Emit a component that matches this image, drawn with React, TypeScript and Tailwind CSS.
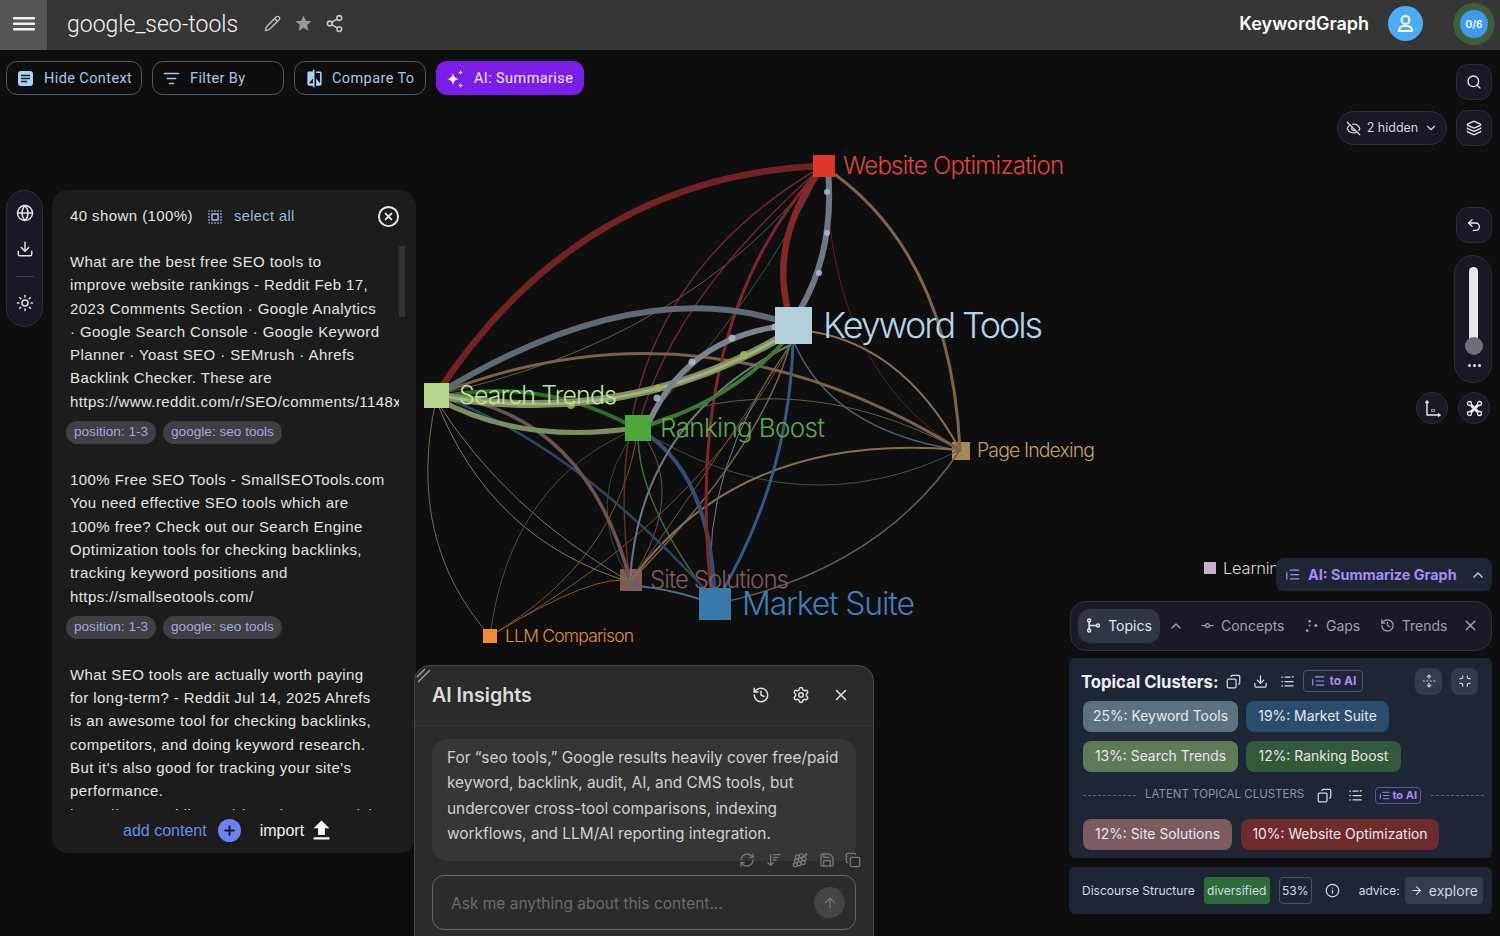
import {
  ArrowRight,
  ArrowUp,
  ArrowDownWideNarrow,
  ChevronDown,
  ChevronUp,
  CircleX,
  Copy,
  Download,
  EyeOff,
  GitCommitHorizontal,
  Globe,
  Grape,
  History,
  Info,
  Layers,
  ListFilter,
  Minimize,
  Pencil,
  Plus,
  RefreshCw,
  Save,
  Search,
  Settings,
  Share2,
  Sun,
  Undo2,
  UnfoldVertical,
  X
} from 'lucide-react'
import { MdCompare, MdFileUpload, MdOutlineSelectAll, MdStar } from 'react-icons/md'

type Edge = [string, number, string]

// path, width, colour
const edges: Edge[] = [
  ['M436 400 Q405 540 490 636', 1, '#6f6f52'],
  ['M436 400 Q490 540 630 582', 1, '#767a5c'],
  ['M436 400 Q505 510 630 582', 1, '#767a5c'],
  ['M638 428 Q510 480 490 636', 1, '#3b5a33'],
  ['M490 636 Q600 570 630 582', 1, '#8a5a2a'],
  ['M490 636 Q700 520 793 340', 1, '#7a5428'],
  ['M490 636 Q620 560 638 428', 1, '#7a5428'],
  ['M436 395 Q690 340 823 166', 1, '#5a5f45'],
  ['M823 166 Q590 300 630 580', 1.5, '#6b2a2a'],
  ['M823 166 Q670 300 638 428', 1.5, '#6b2a2a'],
  ['M823 166 Q760 300 638 428', 1, '#3b5a33'],
  ['M826 170 Q830 370 958 448', 1, '#5c2222'],
  ['M826 170 Q835 240 800 310', 1.5, '#7a5d58'],
  ['M638 428 Q800 530 960 450', 1, '#3b5a33'],
  ['M638 428 Q790 360 960 450', 1, '#6b5a40'],
  ['M638 428 Q635 500 712 600', 1.5, '#3d6b35'],
  ['M638 428 Q580 500 630 580', 1, '#2f4f2c'],
  ['M638 428 Q690 490 630 582', 1, '#6e5350'],
  ['M790 345 Q700 470 712 592', 1, '#767e8a'],
  ['M790 345 Q760 450 630 582', 1.5, '#7a5d58'],
  ['M790 345 Q730 440 630 582', 1, '#7a5428'],
  ['M793 340 Q830 430 958 450', 1.5, '#56606e'],
  ['M715 604 Q880 570 960 450', 1.5, '#6e5a55'],
  ['M630 582 Q740 430 960 450', 2, '#85704c'],
  ['M823 166 Q950 250 960 450', 3, '#7d6545'],
  ['M800 330 Q900 340 960 450', 2, '#8a6f4a'],
  ['M436 395 Q700 290 960 450', 3, '#7a6342'],
  ['M715 604 Q790 480 793 340', 3, '#2f5a85'],
  ['M436 395 Q570 440 715 600', 2.5, '#294663'],
  ['M640 430 Q710 470 715 600', 4, '#2d4f73'],
  ['M436 395 Q585 410 630 580', 3.5, '#6e5250'],
  ['M823 166 Q680 320 712 600', 3, '#7f2727'],
  ['M630 585 Q680 590 715 605', 2, '#4a6a88'],
  ['M790 345 Q640 420 630 580', 2, '#6c7480'],
  ['M436 395 Q580 175 823 166', 6.5, '#722222'],
  ['M820 170 Q770 240 788 310', 6.5, '#822828'],
  ['M436 398 Q540 375 635 428', 4, '#2f6b2c'],
  ['M640 428 Q735 400 790 335', 4, '#3c7a33'],
  ['M436 398 Q520 445 635 428', 5, '#7e8f5f'],
  ['M436 395 Q630 430 793 330', 8, '#7f8f62'],
  ['M436 395 Q630 430 793 330', 3, '#a3b37c'],
  ['M436 395 Q640 270 793 325', 6, '#606a76'],
  ['M650 420 Q690 335 790 325', 5.5, '#7a8490'],
  ['M800 310 Q835 250 828 170', 6, '#6f7785']
]

const dots: [number, number, number, string][] = [
  [827, 192, 3, '#a9bdd3'],
  [827, 233, 3, '#a9bdd3'],
  [819, 273, 3, '#a9bdd3'],
  [775, 327, 3.5, '#a9bdd3'],
  [732, 338, 3.5, '#a9bdd3'],
  [692, 362, 3.5, '#a9bdd3'],
  [657, 398, 3.5, '#a9bdd3'],
  [744, 355, 4, '#9cb45a'],
  [658, 388, 3.5, '#9cb45a'],
  [571, 405, 4, '#9cb45a'],
  [478, 400, 3.5, '#9cb45a']
]

// x, y, size, fill, label, text x, baseline, font size, text width, text colour
const nodes: [number, number, number, string, string, number, number, number, number, string][] = [
  [813, 155, 22, '#e0352b', 'Website Optimization', 843, 174, 24, 221, '#e0453a'],
  [775, 307, 37, '#b3d0d8', 'Keyword Tools', 823, 338, 36, 220, '#b4d4ea'],
  [424, 383, 25, '#b4d68f', 'Search Trends', 459, 404, 25, 158, '#bfe39f'],
  [625, 415, 26, '#4ea63d', 'Ranking Boost', 660, 437, 26, 165, '#56ad48'],
  [699, 588, 32, '#3a77ab', 'Market Suite', 742, 615, 32, 173, '#3f7fbb'],
  [483, 629, 14, '#f08a33', 'LLM Comparison', 505, 642, 17.5, 129, '#e88a38'],
  [1204, 562, 12, '#c6b3c9', 'Learning Tools', 1223, 574, 16.5, 110, '#d8cfe0']
]

// these two sit under the edges
const underNodes: [number, number, number, string, string, number, number, number, number, string][] = [
  [952, 442, 18, '#a58a58', 'Page Indexing', 977, 457, 19.5, 118, '#c29d66'],
  [620, 569, 22, '#835a57', 'Site Solutions', 650, 588, 24, 139, '#7e5b5b']
]

const results = [
  {
    lines: [
      'What are the best free SEO tools to',
      'improve website rankings - Reddit Feb 17,',
      '2023 Comments Section · Google Analytics',
      '· Google Search Console · Google Keyword',
      'Planner · Yoast SEO · SEMrush · Ahrefs',
      'Backlink Checker. These are',
      'https://www.reddit.com/r/SEO/comments/1148xyz'
    ],
    chips: true
  },
  {
    lines: [
      '100% Free SEO Tools - SmallSEOTools.com',
      'You need effective SEO tools which are',
      '100% free? Check out our Search Engine',
      'Optimization tools for checking backlinks,',
      'tracking keyword positions and',
      'https://smallseotools.com/'
    ],
    chips: true
  },
  {
    lines: [
      'What SEO tools are actually worth paying',
      'for long-term? - Reddit Jul 14, 2025 Ahrefs',
      'is an awesome tool for checking backlinks,',
      'competitors, and doing keyword research.',
      "But it's also good for tracking your site's",
      'performance.',
      'https://www.reddit.com/r/SEO/comments/1lz'
    ],
    chips: false
  }
]

function GraphCanvas(): React.JSX.Element {
  return (
    <svg className="absolute left-0 top-0" width={1500} height={936} fill="none">
      {underNodes.map(([x, y, s, fill, label]) => (
        <rect key={label} x={x} y={y} width={s} height={s} fill={fill} />
      ))}
      {edges.map(([d, w, c], i) => (
        <path key={i} d={d} stroke={c} strokeWidth={w} strokeLinecap="round" />
      ))}
      {dots.map(([cx, cy, r, c], i) => (
        <circle key={i} cx={cx} cy={cy} r={r} fill={c} opacity={0.85} />
      ))}
      {nodes.map(([x, y, s, fill, label]) => (
        <rect key={label} x={x} y={y} width={s} height={s} fill={fill} />
      ))}
      {[...nodes, ...underNodes].map(([, , , , label, tx, ty, fs, tw, tc]) => (
        <text
          key={label}
          x={tx}
          y={ty}
          fontSize={fs}
          textLength={tw}
          fill={tc}
          className="font-['Inter'] font-light"
        >
          {label}
        </text>
      ))}
    </svg>
  )
}

function ToolbarButton(props: { icon: React.ReactNode; label: string; className: string }): React.JSX.Element {
  return (
    <button className={`flex h-[34px] items-center rounded-[11px] border border-[#4a5768] pl-[10px] pt-[1px] text-[14.5px] tracking-[0.4px] text-[#a9c6e6] ${props.className}`}>
      {props.icon}
      {props.label}
    </button>
  )
}

function IconTile(props: { children: React.ReactNode }): React.JSX.Element {
  return (
    <div className="flex h-[36px] w-[36px] items-center justify-center rounded-xl border border-[#2c2e3c] bg-[#181924] text-[#e8e8ee]">
      {props.children}
    </div>
  )
}

function RoundTile(props: { children: React.ReactNode }): React.JSX.Element {
  return (
    <div className="flex h-[32px] w-[32px] items-center justify-center rounded-full border border-[#2c2e3c] bg-[#181924] text-[#e8e8ee]">
      {props.children}
    </div>
  )
}

function ListIcon(props: { className?: string }): React.JSX.Element {
  return (
    <svg viewBox="0 0 24 24" fill="none" stroke="currentColor" strokeWidth={2} strokeLinecap="round" className={props.className}>
      <path d="M8 5h14M9 12h13M9 19h13M3 9v10" />
    </svg>
  )
}

function FilterListIcon(): React.JSX.Element {
  return (
    <svg viewBox="0 0 24 24" fill="none" stroke="currentColor" strokeWidth={2} strokeLinecap="round" className="h-[15px] w-[15px] text-[#d5dae2]">
      <path d="M3 5h1M8 5h8M3 12h1M8 12h13M3 19h1M8 19h13" />
      <path d="M18 3.5h5l-2.5 3z" fill="currentColor" strokeWidth={0} />
    </svg>
  )
}

function ToAiTag(props: { small?: boolean }): React.JSX.Element {
  return props.small ? (
    <span className="flex h-[17px] w-[46px] items-center justify-center gap-[2px] rounded-[4px] border border-[#5b5a9a] text-[11px] font-bold text-[#a78bfa]">
      <ListIcon className="h-[11px] w-[11px]" />
      to AI
    </span>
  ) : (
    <span className="flex h-[22px] w-[60px] items-center justify-center gap-[5px] rounded-[4px] border border-[#4f4f86] text-[12px] font-bold text-[#a78bfa]">
      <ListIcon className="h-[14px] w-[14px]" />
      to AI
    </span>
  )
}

function ClusterChip(props: { label: string; className: string }): React.JSX.Element {
  return (
    <span className={`flex h-[31px] items-center justify-center rounded-lg text-[13.9px] text-[#e6e8ec] ${props.className}`}>
      {props.label}
    </span>
  )
}

function ContextPanel(): React.JSX.Element {
  return (
    <div className="absolute left-[52px] top-[190px] flex h-[663px] w-[364px] flex-col rounded-2xl bg-[#1c1c1c] font-['Liberation_Sans'] text-[15px] tracking-[0.42px] text-[#e4e4e4]">
      <div className="flex h-[56px] shrink-0 items-center pb-[3px] pl-[18px] pr-[16px]">
        <span>40 shown (100%)</span>
        <MdOutlineSelectAll className="ml-[13px] h-[18px] w-[18px] text-[#9bbbdc]" />
        <span className="ml-[10px] text-[14.5px] text-[#9bbbdc]">select all</span>
        <CircleX className="ml-auto h-[23px] w-[23px] text-[#e8e8e8]" />
      </div>
      <div className="relative h-[564px] overflow-hidden pl-[18px] pr-[17px] pt-[4px]">
        <div className="absolute right-[11px] top-0 h-[71px] w-[6px] bg-[#333]" />
        {results.map((r, i) => (
          <div key={i} className="mb-[24px]">
            {r.lines.map((line) => (
              <div key={line} className="h-[23.3px] overflow-hidden whitespace-nowrap leading-[23.3px]">
                {line}
              </div>
            ))}
            {r.chips && (
              <div className="mt-[8px] -ml-[4px] flex gap-[7px] text-[13.6px] tracking-normal text-[#a5a8dc]">
                <span className="flex h-[23px] items-center rounded-full bg-[#3f3f44] px-[8px]">position: 1-3</span>
                <span className="flex h-[23px] items-center rounded-full bg-[#3f3f44] px-[8px]">google: seo tools</span>
              </div>
            )}
          </div>
        ))}
      </div>
      <div className="flex flex-1 items-center pb-[2px] pl-[71px] text-[16px] tracking-normal">
        <span className="text-[#6b8cef]">add content</span>
        <span className="ml-[11px] flex h-[23px] w-[23px] items-center justify-center rounded-full bg-[#6b82f0] text-[#15171f]">
          <Plus className="h-[15px] w-[15px]" strokeWidth={3} />
        </span>
        <span className="ml-[19px] text-[#f2f2f2]">import</span>
        <MdFileUpload className="ml-[4px] h-[27px] w-[27px] text-white" />
      </div>
    </div>
  )
}

function InsightsPanel(): React.JSX.Element {
  return (
    <div className="absolute left-[414px] top-[665px] h-[290px] w-[460px] rounded-2xl border border-[#4a4a4a] bg-[#2b2b2b] font-['Inter']">
      <svg className="absolute left-[1px] top-[2px] h-[16px] w-[16px] text-[#aaa]" viewBox="0 0 16 16" stroke="currentColor" strokeWidth={1.2}>
        <path d="M1 9L9 1M2 14L14 2" />
      </svg>
      <div className="flex h-[60px] items-center border-b border-[#3a3a3a] pb-[2px] pl-[17px] pr-[23px] text-[#e0e0e0]">
        <span className="mt-[2px] text-[19.6px] font-semibold text-[#dcdcdc]">AI Insights</span>
        <div className="ml-auto flex items-center gap-[22px]">
          <History className="h-[18px] w-[18px]" />
          <Settings className="h-[18px] w-[18px]" />
          <X className="h-[18px] w-[18px]" />
        </div>
      </div>
      <div className="relative mx-[17px] mt-[13px] h-[122px] rounded-2xl bg-[#363636] pl-[15px] pt-[6px] text-[15.4px] leading-[25.3px] text-[#cfcfd4]">
        <div>For “seo tools,” Google results heavily cover free/paid</div>
        <div>keyword, backlink, audit, AI, and CMS tools, but</div>
        <div>undercover cross-tool comparisons, indexing</div>
        <div>workflows, and LLM/AI reporting integration.</div>
        <div className="absolute -right-[5px] bottom-[-7px] flex gap-[10.5px] text-[#777]">
          <RefreshCw className="h-[16px] w-[16px]" />
          <ArrowDownWideNarrow className="h-[16px] w-[16px]" />
          <Grape className="h-[16px] w-[16px]" />
          <Save className="h-[16px] w-[16px]" />
          <Copy className="h-[16px] w-[16px]" />
        </div>
      </div>
      <div className="mx-[17px] mt-[14px] flex h-[55px] items-center rounded-xl border border-[#666] pl-[18px] pr-[10px] text-[15.5px] text-[#6c6c6c]">
        <span className="mt-[2px]">Ask me anything about this content...</span>
        <span className="ml-auto flex h-[31px] w-[31px] items-center justify-center rounded-full bg-[#444] text-[#777]">
          <ArrowUp className="h-[16px] w-[16px]" />
        </span>
      </div>
    </div>
  )
}

function TopicsPanel(): React.JSX.Element {
  return (
    <div className="absolute right-[8px] top-[558px] flex w-[423px] flex-col items-end font-['Inter']">
      <div className="flex h-[33px] w-[216px] items-center rounded-lg bg-[#1e2635] pl-[9px] pr-[6px] text-[14.4px] font-bold text-[#a78bfa]">
        <ListIcon className="mr-[8px] h-[15px] w-[15px]" />
        AI: Summarize Graph
        <ChevronUp className="ml-auto h-[16px] w-[16px] text-[#c7d0dc]" />
      </div>
      <div className="mt-[10px] flex h-[50px] w-[422px] items-center rounded-2xl border border-[#2e3040] bg-[#181a26] pb-[1px] pl-[7px] text-[14px] text-[#9ca3af]">
        <div className="flex h-[34px] w-[82px] items-center justify-center gap-[7px] rounded-xl bg-[#2f3644] text-[#e5e7eb]">
          <svg viewBox="0 0 24 24" fill="none" stroke="currentColor" strokeWidth={2.4} className="h-[15px] w-[15px]">
            <circle cx="5" cy="4" r="2.4" />
            <circle cx="5" cy="20" r="2.4" />
            <circle cx="19" cy="12" r="2.4" />
            <path d="M5 6.5v11M5 12h11" />
          </svg>
          Topics
        </div>
        <ChevronUp className="ml-[8px] h-[16px] w-[16px]" />
        <GitCommitHorizontal className="ml-[15.5px] h-[15px] w-[15px]" />
        <span className="ml-[6.5px]">Concepts</span>
        <svg viewBox="0 0 24 24" fill="currentColor" className="ml-[20px] h-[15px] w-[15px]">
          <circle cx="9" cy="5" r="2" />
          <circle cx="19" cy="12" r="2.4" />
          <circle cx="9" cy="12" r="1.6" />
          <circle cx="5" cy="20" r="2.2" />
        </svg>
        <span className="ml-[6.5px]">Gaps</span>
        <History className="ml-[20px] h-[15px] w-[15px]" />
        <span className="ml-[6.5px]">Trends</span>
        <X className="ml-[14.5px] h-[17px] w-[17px]" />
      </div>
      <div className="mt-[7px] h-[200px] w-full rounded-md bg-[#1e2635] pl-[12px] pr-[6px] pt-[9px]">
        <div className="flex h-[28px] items-center">
          <span className="mt-[4px] text-[16.7px] font-bold text-[#eceef2]">Topical Clusters:</span>
          <Copy className="ml-[8px] h-[15px] w-[15px] -scale-x-100 text-[#d5dae2]" />
          <Download className="ml-[12px] h-[15px] w-[15px] text-[#d5dae2]" />
          <span className="ml-[12px]"><FilterListIcon /></span>
          <span className="ml-[8px]"><ToAiTag /></span>
          <span className="ml-auto flex gap-[9px] pr-[8px]">
            <span className="flex h-[27px] w-[27px] items-center justify-center rounded-lg bg-[#343b4a] text-[#c7ccd6]"><UnfoldVertical className="h-[14px] w-[14px]" /></span>
            <span className="flex h-[27px] w-[27px] items-center justify-center rounded-lg bg-[#343b4a] text-[#c7ccd6]"><Minimize className="h-[14px] w-[14px]" /></span>
          </span>
        </div>
        <div className="mt-[6px] flex gap-[8px] pl-[2px]">
          <ClusterChip label="25%: Keyword Tools" className="w-[155px] bg-[#5f7080]" />
          <ClusterChip label="19%: Market Suite" className="w-[143px] bg-[#2c4c6d]" />
        </div>
        <div className="mt-[9px] flex gap-[8px] pl-[2px]">
          <ClusterChip label="13%: Search Trends" className="w-[155px] bg-[#5e7a58]" />
          <ClusterChip label="12%: Ranking Boost" className="w-[155px] bg-[#33583a]" />
        </div>
        <div className="mt-[14px] flex h-[18px] items-center pl-[2px] text-[11.5px] text-[#8b93a1]">
          <span className="w-[53px] border-t border-dashed border-[#5d6675]" />
          <span className="ml-[9px]">LATENT TOPICAL CLUSTERS</span>
          <Copy className="ml-[13px] h-[15px] w-[15px] -scale-x-100 text-[#d5dae2]" />
          <span className="ml-[16px]"><FilterListIcon /></span>
          <span className="ml-[12px]"><ToAiTag small /></span>
          <span className="ml-[10px] w-[53px] border-t border-dashed border-[#5d6675]" />
        </div>
        <div className="mt-[15px] flex gap-[9px] pl-[2px]">
          <ClusterChip label="12%: Site Solutions" className="w-[149px] bg-[#7c5b5e]" />
          <ClusterChip label="10%: Website Optimization" className="w-[198px] bg-[#6f2b2e]" />
        </div>
      </div>
      <div className="mt-[9px] flex h-[47px] w-full items-center rounded-md bg-[#1e2635] pl-[13px] text-[12px] text-[#d5dae2]">
        Discourse Structure
        <span className="ml-[9px] flex h-[27px] w-[66px] items-center justify-center rounded bg-[#2e6b3a]">diversified</span>
        <span className="ml-[9px] flex h-[27px] w-[33px] items-center justify-center rounded border border-[#475063]">53%</span>
        <Info className="ml-[13.5px] h-[15px] w-[15px]" />
        <span className="ml-[18.5px]">advice:</span>
        <span className="ml-[5px] flex h-[27px] w-[78px] items-center justify-center gap-[6px] rounded bg-[#343b4a] text-[14px]">
          <ArrowRight className="h-[13px] w-[13px]" />
          explore
        </span>
      </div>
    </div>
  )
}

export default function App(): React.JSX.Element {
  return (
    <div className="relative h-[936px] w-[1500px] overflow-hidden bg-[#0e0e0e] font-['Roboto']">
      <GraphCanvas />

      {/* Top bar */}
      <header className="relative flex h-[50px] items-center bg-[#363636] text-white">
        <div className="flex h-full w-[47px] items-center justify-center bg-[#555]">
          <svg className="mb-[3px]" width="22" height="14" viewBox="0 0 22 14" fill="#f2f2f2">
            <rect y="0" width="22" height="2.4" rx="1" />
            <rect y="5.5" width="22" height="2.4" rx="1" />
            <rect y="11" width="22" height="2.4" rx="1" />
          </svg>
        </div>
        <span className="ml-[20px] w-[172px] text-[23px] font-light text-[#f2f2f2]">google_seo-tools</span>
        <Pencil className="-mt-[3px] ml-[25px] h-[17px] w-[17px] text-[#bdbdbd]" />
        <MdStar className="-mt-[3px] ml-[13px] h-[19px] w-[19px] text-[#9a9a9a]" />
        <Share2 className="-mt-[3px] ml-[12px] h-[19px] w-[19px] text-[#c4c4c4]" />
        <span className="-mt-[3px] ml-auto font-['Inter'] text-[18px] font-semibold">KeywordGraph</span>
        <span className="mb-[3px] ml-[19px] flex h-[35px] w-[35px] items-center justify-center rounded-full bg-[#4daaf5]">
          <svg width="21" height="21" viewBox="0 0 24 24" fill="none" stroke="white" strokeWidth="2.4" strokeLinejoin="round">
            <circle cx="12" cy="8" r="4.5" />
            <path d="M4.5 20.5c0-4 3-6 7.5-6s7.5 2 7.5 6z" />
          </svg>
        </span>
        <span className="mb-[2px] ml-[30px] mr-[5px] flex h-[42px] w-[42px] items-center justify-center rounded-full bg-[#3f5e3b]">
          <span className="flex h-[28px] w-[28px] items-center justify-center rounded-full bg-[#3f9bf0] font-['Inter'] text-[10px] font-semibold">
            0/6
          </span>
        </span>
      </header>

      {/* Toolbar */}
      <div className="relative flex gap-[10px] pl-[6px] pt-[11px]">
        <ToolbarButton
          className="w-[136px] gap-[10px]"
          label="Hide Context"
          icon={
            <svg width="17" height="17" viewBox="0 0 17 17">
              <rect x="1" y="1" width="15" height="15" rx="3" fill="#a9d2f5" />
              <path d="M4 5.5h9M4 8.5h9M4 11.5h6" stroke="#15202b" strokeWidth="1.5" />
            </svg>
          }
        />
        <ToolbarButton className="w-[132px] gap-[10px]" label="Filter By" icon={<ListFilter className="h-[17px] w-[17px]" />} />
        <ToolbarButton className="w-[132px] gap-[8px]" label="Compare To" icon={<MdCompare className="h-[19px] w-[19px] text-[#a9d2f5]" />} />
        <button className="flex h-[34px] w-[148px] items-center gap-[9px] rounded-[11px] bg-[#7b1fe8] pl-[9px] pt-[1px] text-[14.5px] tracking-[0.4px] text-[#f0e6ff]">
          <svg width="20" height="20" viewBox="0 0 20 20" fill="white">
            <path d="M8 4c.8 4 2 5.2 6 6-4 .8-5.2 2-6 6-.8-4-2-5.2-6-6 4-.8 5.2-2 6-6z" />
            <path d="M15.5 1c.3 1.6.9 2.2 2.5 2.5-1.6.3-2.2.9-2.5 2.5-.3-1.6-.9-2.2-2.5-2.5 1.6-.3 2.2-.9 2.5-2.5zM15.5 14c.3 1.6.9 2.2 2.5 2.5-1.6.3-2.2.9-2.5 2.5-.3-1.6-.9-2.2-2.5-2.5 1.6-.3 2.2-.9 2.5-2.5z" />
          </svg>
          AI: Summarise
        </button>
      </div>

      {/* Left rail */}
      <div className="absolute left-[6px] top-[190px] flex h-[137px] w-[37px] flex-col items-center rounded-full border border-[#2c2e3c] bg-[#181924] pt-[13px] text-[#e0e0e6]">
        <Globe className="h-[18px] w-[18px]" />
        <Download className="mt-[18px] h-[18px] w-[18px]" />
        <div className="mt-[18px] w-[18px] border-t border-[#3a3c48]" />
        <Sun className="mt-[17px] h-[18px] w-[18px]" />
      </div>

      <ContextPanel />
      <InsightsPanel />

      {/* Right controls */}
      <div className="absolute left-[1337px] top-[64px] flex w-[155px] flex-col items-end gap-[10px]">
        <IconTile><Search className="h-[16px] w-[16px]" /></IconTile>
        <div className="flex items-center gap-[9px]">
          <div className="flex h-[34px] w-[110px] items-center justify-center gap-[6px] rounded-full border border-[#2c2e3c] bg-[#181924] font-['Inter'] text-[12.5px] text-[#d6d6dc]">
            <EyeOff className="h-[15px] w-[15px]" />
            2 hidden
            <ChevronDown className="h-[14px] w-[14px]" />
          </div>
          <IconTile><Layers className="h-[16px] w-[16px]" /></IconTile>
        </div>
      </div>
      <div className="absolute left-[1416px] top-[207px] flex w-[76px] flex-col items-end">
        <IconTile><Undo2 className="h-[16px] w-[16px]" /></IconTile>
        <div className="relative mt-[12px] flex h-[128px] w-[38px] justify-center rounded-full border border-[#2c2e3c] bg-[#181924]">
          <div className="mt-[11px] h-[80px] w-[9px] rounded-full bg-[#e8e8e8]" />
          <div className="absolute left-[10px] top-[81px] h-[18px] w-[18px] rounded-full bg-[#6b7078]" />
          <div className="absolute left-[13px] top-[108px] flex gap-[2px]">
            <i className="h-[3px] w-[3px] rounded-full bg-[#e0e0e0]" />
            <i className="h-[3px] w-[3px] rounded-full bg-[#e0e0e0]" />
            <i className="h-[3px] w-[3px] rounded-full bg-[#e0e0e0]" />
          </div>
        </div>
        <div className="mr-[2px] mt-[9px] flex gap-[10px]">
          <RoundTile>
            <svg width="17" height="17" viewBox="0 0 17 17" fill="none" stroke="currentColor" strokeWidth="1.4">
              <path d="M3 1v14h13M1.5 3L3 1l1.5 2M14 13.5l2 1.5-2 1.5" />
              <path d="M7.5 9.5h3v2h-3z" strokeWidth="0.6" />
            </svg>
          </RoundTile>
          <RoundTile>
            <svg width="17" height="17" viewBox="0 0 17 17" fill="none" stroke="currentColor">
              <path d="M4 4l9 9M13 4l-9 9" strokeWidth="3" />
              <circle cx="3.5" cy="3.5" r="2" strokeWidth="1.3" fill="#181924" />
              <circle cx="13.5" cy="3.5" r="2" strokeWidth="1.3" fill="#181924" />
              <circle cx="3.5" cy="13.5" r="2" strokeWidth="1.3" fill="#181924" />
              <circle cx="13.5" cy="13.5" r="2" strokeWidth="1.3" fill="#181924" />
            </svg>
          </RoundTile>
        </div>
      </div>

      <TopicsPanel />
    </div>
  )
}
